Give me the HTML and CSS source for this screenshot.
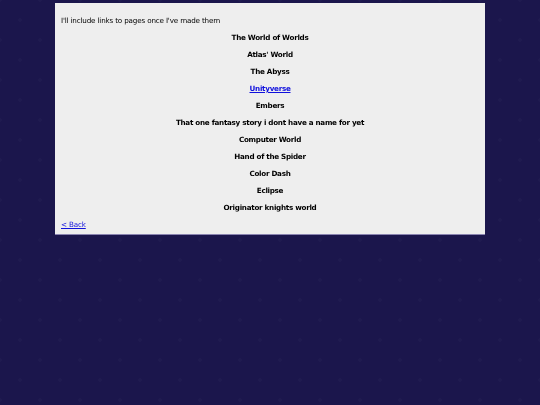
FILE: index.html
```html
<!DOCTYPE html>
<html lang="en">
<head>
  <meta charset="UTF-8">
  <title>Worlds</title>
  <link rel="stylesheet" href="styles.css">
</head>
<body>
  <div id="contenuto">
    <p>I'll include links to pages once I've made them</p>
    <p class="titolo">The World of Worlds</p>
    <p class="titolo">Atlas' World</p>
    <p class="titolo">The Abyss</p>
    <p class="titolo"><a href="#">Unityverse</a></p>
    <p class="titolo">Embers</p>
    <p class="titolo">That one fantasy story i dont have a name for yet</p>
    <p class="titolo">Computer World</p>
    <p class="titolo">Hand of the Spider</p>
    <p class="titolo">Color Dash</p>
    <p class="titolo">Eclipse</p>
    <p class="titolo">Originator knights world</p>
    <p class="indietro"><a href="#">&lt; Back</a></p>
  </div>
</body>
</html>
```

FILE: styles.css
```css
html, body {
  margin: 0;
  padding: 0;
  height: 100%;
}

body {
  background-color: #1b164c;
  background-image:
    radial-gradient(circle, rgba(255, 255, 255, 0.02) 1.5px, transparent 2px),
    radial-gradient(circle, rgba(255, 255, 255, 0.02) 1.5px, transparent 2px);
  background-size: 40px 40px;
  background-position: 0 0, 20px 20px;
  font-family: "DejaVu Sans", sans-serif;
  font-size: 7.2px;
  letter-spacing: -0.17px;
  color: #000;
  overflow: hidden;
}

#contenuto {
  width: 418px;
  margin: 3px auto 0;
  padding: 5px 6px 0;
  background: #eeeeee;
  border-bottom: 1px solid #8a84b0;
  display: flow-root;
}

p {
  margin: 8px 0;
  line-height: 9px;
  filter: blur(0.2px);
}

.titolo {
  text-align: center;
  font-weight: bold;
  letter-spacing: -0.28px;
}

.indietro {
  margin-bottom: 5px;
}

a {
  color: #1111dd;
}
```
